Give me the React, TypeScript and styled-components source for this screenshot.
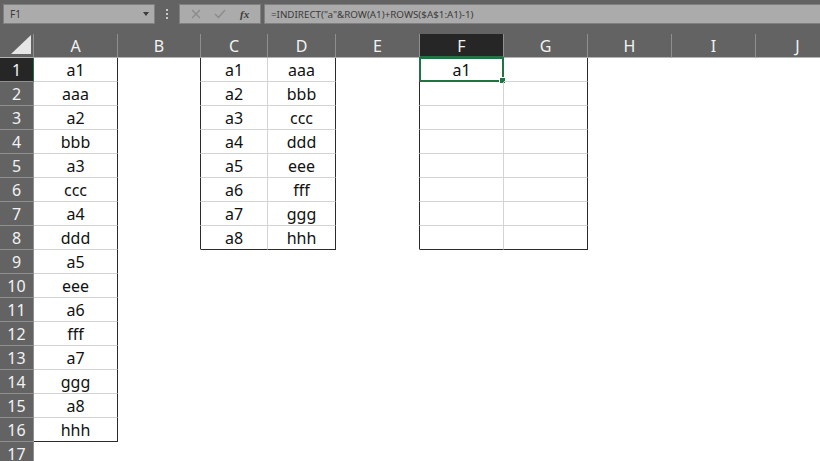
import React from "react";
import styled, { createGlobalStyle } from "styled-components";

const GlobalStyle = createGlobalStyle`
  html, body {
    margin: 0;
    padding: 0;
    background: #ffffff;
  }
  body {
    font-family: "Noto Sans", "Noto Sans CJK KR", sans-serif;
  }
`;

const COLORS = {
  chrome: "#636363",
  boxFill: "#ababab",
  boxBorder: "#808080",
  headerText: "#f2f2f2",
  headerLine: "#8f8f8f",
  selectedHeader: "#262626",
  green: "#217346",
  outer: "#2b2b2b",
  inner: "#d4d4d4",
};

const COL_WIDTHS = [84, 83, 67, 68, 84, 84, 84, 84, 84, 84];
const COL_NAMES = ["A", "B", "C", "D", "E", "F", "G", "H", "I", "J"];
const ROW_COUNT = 17;

interface Range {
  c0: number;
  c1: number;
  r0: number;
  r1: number;
}

const RANGES: Range[] = [
  { c0: 1, c1: 1, r0: 1, r1: 16 },
  { c0: 3, c1: 4, r0: 1, r1: 8 },
  { c0: 6, c1: 7, r0: 1, r1: 8 },
];

const colA = ["a1", "aaa", "a2", "bbb", "a3", "ccc", "a4", "ddd", "a5", "eee", "a6", "fff", "a7", "ggg", "a8", "hhh"];
const colC = ["a1", "a2", "a3", "a4", "a5", "a6", "a7", "a8"];
const colD = ["aaa", "bbb", "ccc", "ddd", "eee", "fff", "ggg", "hhh"];

const valueAt = (r: number, c: number): string => {
  if (c === 1) return colA[r - 1] ?? "";
  if (c === 3) return colC[r - 1] ?? "";
  if (c === 4) return colD[r - 1] ?? "";
  if (c === 6 && r === 1) return "a1";
  return "";
};

const rangeAt = (r: number, c: number) =>
  RANGES.find((g) => r >= g.r0 && r <= g.r1 && c >= g.c0 && c <= g.c1);

// inner gridline inside a bordered block, dark line on its outline
const edgeColor = (r: number, c: number, dir: "right" | "bottom") => {
  const here = rangeAt(r, c);
  const nr = dir === "bottom" ? r + 1 : r;
  const nc = dir === "right" ? c + 1 : c;
  const next = rangeAt(nr, nc);
  if (here && here === next) return COLORS.inner;
  if (here || next) return COLORS.outer;
  return "transparent";
};

const Page = styled.div`
  width: 820px;
  height: 461px;
  overflow: hidden;
  background: #ffffff;
`;

const FormulaBar = styled.div`
  display: flex;
  align-items: flex-start;
  height: 34px;
  padding: 4px 0 0 3px;
  box-sizing: border-box;
  background: ${COLORS.chrome};
`;

const NameBox = styled.div`
  width: 152px;
  height: 20px;
  box-sizing: border-box;
  background: ${COLORS.boxFill};
  border: 1px solid ${COLORS.boxBorder};
  display: flex;
  align-items: center;
  justify-content: space-between;
  padding: 0 5px 0 6px;
  font-size: 10px;
  color: #3a3a3a;
`;

const DropArrow = styled.span`
  width: 0;
  height: 0;
  border-left: 3px solid transparent;
  border-right: 3px solid transparent;
  border-top: 4px solid #3c3c3c;
`;

const Grip = styled.div`
  width: 24px;
  height: 20px;
  display: flex;
  flex-direction: column;
  align-items: center;
  justify-content: center;
  gap: 2px;
  & > span {
    width: 2px;
    height: 2px;
    background: #c8c8c8;
  }
`;

const FxBox = styled.div`
  width: 82px;
  height: 20px;
  box-sizing: border-box;
  background: ${COLORS.boxFill};
  border: 1px solid ${COLORS.boxBorder};
  display: flex;
  align-items: center;
  justify-content: space-around;
  padding: 0 4px;
`;

const FxText = styled.span`
  font-family: "Liberation Serif", serif;
  font-style: italic;
  font-weight: bold;
  font-size: 11px;
  color: #3c3c3c;
`;

const FormulaInput = styled.div`
  flex: 1;
  height: 20px;
  margin-left: 3px;
  box-sizing: border-box;
  background: ${COLORS.boxFill};
  border: 1px solid ${COLORS.boxBorder};
  border-right: none;
  display: flex;
  align-items: center;
  padding-left: 6px;
  font-size: 9.8px;
  color: #3a3a3a;
  white-space: nowrap;
`;

const Sheet = styled.div`
  display: grid;
  grid-template-columns: 34px ${COL_WIDTHS.map((w) => `${w}px`).join(" ")};
  grid-template-rows: 24px;
  grid-auto-rows: 24px;
`;

const Corner = styled.div`
  background: ${COLORS.chrome};
  border-right: 1px solid ${COLORS.headerLine};
  border-bottom: 1px solid #b4b4b4;
  box-sizing: border-box;
  display: flex;
  align-items: flex-end;
  justify-content: flex-end;
  padding: 0 2px 3px 0;
`;

const ColHeader = styled.div<{ $selected?: boolean }>`
  background: ${(p) => (p.$selected ? COLORS.selectedHeader : COLORS.chrome)};
  color: ${COLORS.headerText};
  border-right: 1px solid ${COLORS.headerLine};
  border-bottom: ${(p) => (p.$selected ? `2px solid ${COLORS.green}` : "1px solid #b4b4b4")};
  box-sizing: border-box;
  display: flex;
  align-items: center;
  justify-content: center;
  font-size: 16px;
  padding-top: 1px;
`;

const RowHeader = styled.div<{ $selected?: boolean }>`
  background: ${(p) => (p.$selected ? COLORS.selectedHeader : COLORS.chrome)};
  color: ${COLORS.headerText};
  border-bottom: 1px solid ${COLORS.headerLine};
  border-right: 1px solid ${(p) => (p.$selected ? COLORS.green : COLORS.headerLine)};
  box-sizing: border-box;
  display: flex;
  align-items: center;
  justify-content: center;
  font-size: 16px;
`;

const Cell = styled.div<{ $right: string; $bottom: string }>`
  position: relative;
  box-sizing: border-box;
  border-right: 1px solid ${(p) => p.$right};
  border-bottom: 1px solid ${(p) => p.$bottom};
  display: flex;
  align-items: center;
  justify-content: center;
  font-size: 16px;
  color: #111111;
  padding-top: 1px;
`;

const Selection = styled.div`
  position: absolute;
  left: -1px;
  top: -1px;
  right: -1px;
  bottom: -1px;
  border: 2px solid ${COLORS.green};
  pointer-events: none;
`;

const FillHandle = styled.div`
  position: absolute;
  right: -4px;
  bottom: -4px;
  width: 5px;
  height: 5px;
  background: ${COLORS.green};
  border: 1px solid #ffffff;
`;

const CornerTriangle = () => (
  <svg width="20" height="19" viewBox="0 0 20 19">
    <polygon points="20,0 20,19 0,19" fill="#e6e6e6" />
  </svg>
);

const CrossIcon = () => (
  <svg width="10" height="10" viewBox="0 0 10 10">
    <path d="M1 1 L9 9 M9 1 L1 9" stroke="#8a8a8a" strokeWidth="1.3" fill="none" />
  </svg>
);

const CheckIcon = () => (
  <svg width="12" height="10" viewBox="0 0 12 10">
    <path d="M1 5 L4.5 8.5 L11 1" stroke="#8a8a8a" strokeWidth="1.3" fill="none" />
  </svg>
);

const App = () => {
  const rows = Array.from({ length: ROW_COUNT }, (_, i) => i + 1);
  const cols = COL_NAMES.map((_, i) => i + 1);

  return (
    <Page>
      <GlobalStyle />
      <FormulaBar>
        <NameBox>
          <span>F1</span>
          <DropArrow />
        </NameBox>
        <Grip>
          <span />
          <span />
          <span />
        </Grip>
        <FxBox>
          <CrossIcon />
          <CheckIcon />
          <FxText>fx</FxText>
        </FxBox>
        <FormulaInput>=INDIRECT("a"&amp;ROW(A1)+ROWS($A$1:A1)-1)</FormulaInput>
      </FormulaBar>
      <Sheet>
        <Corner>
          <CornerTriangle />
        </Corner>
        {COL_NAMES.map((name) => (
          <ColHeader key={name} $selected={name === "F"}>
            {name}
          </ColHeader>
        ))}
        {rows.map((r) => (
          <React.Fragment key={r}>
            <RowHeader $selected={r === 1}>{r}</RowHeader>
            {cols.map((c) => (
              <Cell
                key={c}
                $right={edgeColor(r, c, "right")}
                $bottom={edgeColor(r, c, "bottom")}
              >
                {valueAt(r, c)}
                {r === 1 && c === 6 && (
                  <Selection>
                    <FillHandle />
                  </Selection>
                )}
              </Cell>
            ))}
          </React.Fragment>
        ))}
      </Sheet>
    </Page>
  );
};

export default App;
